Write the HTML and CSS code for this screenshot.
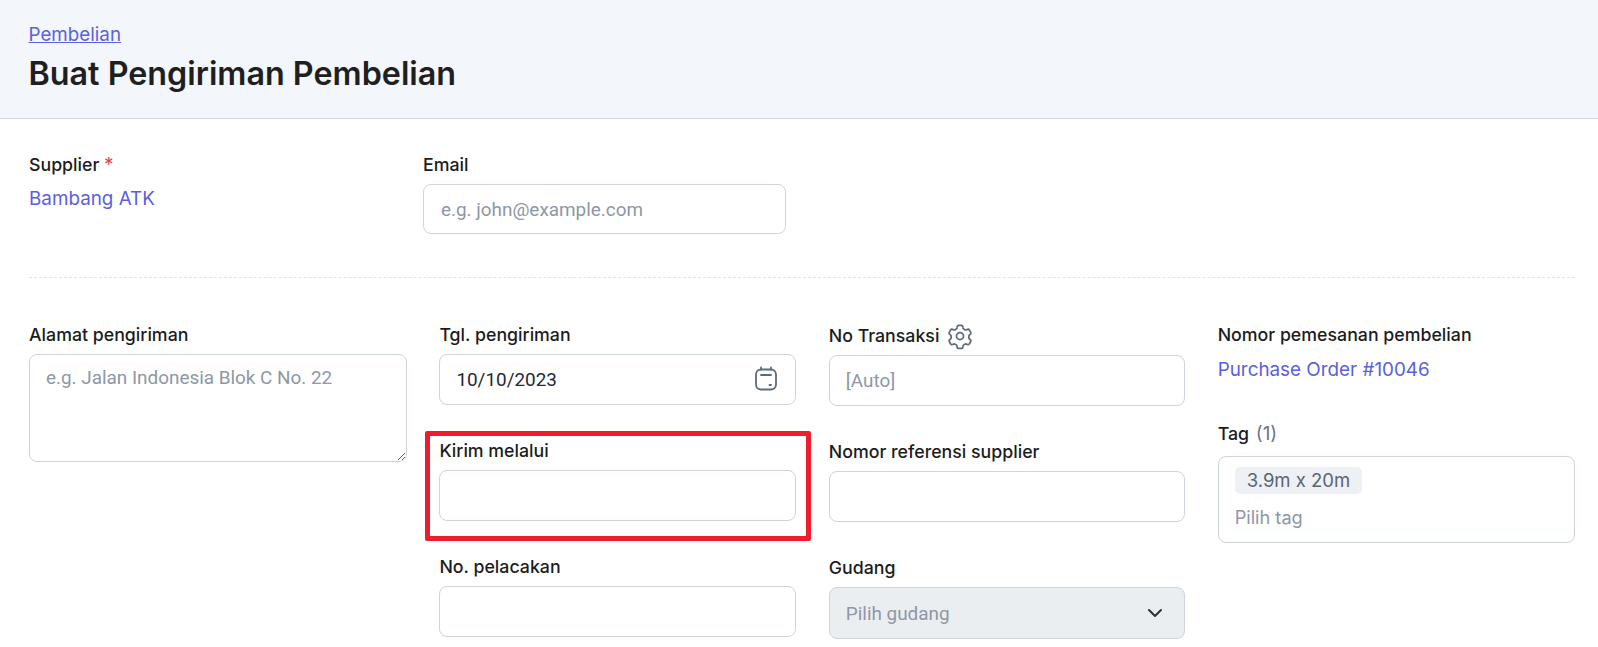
FILE: index.html
```html
<!DOCTYPE html>
<html lang="id">
<head>
<meta charset="utf-8">
<title>Buat Pengiriman Pembelian</title>
<link rel="stylesheet" href="styles.css">
</head>
<body>
<header class="page-header">
  <a class="crumb" href="#">Pembelian</a>
  <h1 class="title">Buat Pengiriman Pembelian</h1>
</header>
<main class="content">
  <section class="top-row">
    <div class="group">
      <div class="label">Supplier <span class="req">*</span></div>
      <a class="value" href="#">Bambang ATK</a>
    </div>
    <div class="group">
      <label class="label">Email</label>
      <input class="field" type="text" placeholder="e.g. john@example.com">
    </div>
  </section>
  <hr class="divider">
  <section class="form-grid">
    <div class="col">
      <label class="label">Alamat pengiriman</label>
      <textarea class="field area" placeholder="e.g. Jalan Indonesia Blok C No. 22"></textarea>
    </div>
    <div class="col">
      <div class="group spaced">
        <label class="label">Tgl. pengiriman</label>
        <div class="with-icon">
          <input class="field dark" type="text" value="10/10/2023">
          <svg class="cal" width="24" height="25" viewBox="0 0 24 25" fill="none" stroke="#5f6b7a" stroke-width="1.8" stroke-linecap="round"><rect x="2" y="3.5" width="20" height="20" rx="5"/><path d="M7 1.5v2M17 1.5v2M7 9h10M15.5 19h1.5"/></svg>
        </div>
      </div>
      <div class="group spaced highlighted">
        <span class="mark"></span>
        <label class="label">Kirim melalui</label>
        <input class="field" type="text">
      </div>
      <div class="group">
        <label class="label">No. pelacakan</label>
        <input class="field" type="text">
      </div>
    </div>
    <div class="col">
      <div class="group spaced">
        <div class="label icon-label">No Transaksi
          <svg width="28" height="28" viewBox="0 0 24 24" fill="none" stroke="#5f6b7a" stroke-width="1.5" stroke-linecap="round" stroke-linejoin="round"><path d="M9.6 3.9c.1-.6.6-1 1.2-1h2.4c.6 0 1.1.4 1.2 1l.2 1.2c.1.4.3.7.6.9l1 .6c.3.2.7.2 1.1.1l1.2-.4c.6-.2 1.2 0 1.5.5l1.2 2.1c.3.5.2 1.1-.3 1.5l-.9.8c-.3.3-.5.6-.4 1v1.2c0 .4.1.7.4 1l.9.8c.5.4.6 1 .3 1.5l-1.2 2.1c-.3.5-.9.7-1.5.5l-1.2-.4c-.4-.1-.8-.1-1.1.1l-1 .6c-.3.2-.5.5-.6.9l-.2 1.2c-.1.6-.6 1-1.2 1h-2.4c-.6 0-1.1-.4-1.2-1l-.2-1.2c-.1-.4-.3-.7-.6-.9l-1-.6c-.3-.2-.7-.2-1.1-.1l-1.2.4c-.6.2-1.2 0-1.5-.5l-1.2-2.1c-.3-.5-.2-1.1.3-1.5l.9-.8c.3-.3.5-.6.4-1v-1.2c0-.4-.1-.7-.4-1l-.9-.8c-.5-.4-.6-1-.3-1.5l1.2-2.1c.3-.5.9-.7 1.5-.5l1.2.4c.4.1.8.1 1.1-.1l1-.6c.3-.2.5-.5.6-.9z"/><circle cx="12" cy="12" r="3"/></svg>
        </div>
        <input class="field" type="text" placeholder="[Auto]">
      </div>
      <div class="group spaced">
        <label class="label">Nomor referensi supplier</label>
        <input class="field" type="text">
      </div>
      <div class="group">
        <label class="label">Gudang</label>
        <div class="select">
          <span>Pilih gudang</span>
          <svg width="20" height="20" viewBox="0 0 20 20" fill="none" stroke="#2b2f36" stroke-width="2" stroke-linecap="round" stroke-linejoin="round"><path d="M4 7l6 6 6-6"/></svg>
        </div>
      </div>
    </div>
    <div class="col">
      <div class="group order">
        <div class="label">Nomor pemesanan pembelian</div>
        <a class="value" href="#">Purchase Order #10046</a>
      </div>
      <div class="group">
        <div class="label tag-label">Tag <span class="count">(1)</span></div>
        <div class="tagbox">
          <span class="chip">3.9m x 20m</span>
          <span class="tag-ph">Pilih tag</span>
        </div>
      </div>
    </div>
  </section>
</main>
</body>
</html>
```

FILE: styles.css
```css
* { box-sizing: border-box; }
html, body { margin: 0; padding: 0; }
body {
  background: #fff;
  color: #1c1c1c;
  font-family: Inter, "Liberation Sans", sans-serif;
  font-size: 16px;
  overflow: hidden;
  height: 647px;
}
.page-header {
  height: 119px;
  padding: 23px 29px 0 28.5px;
  background: #f3f6fb;
  border-bottom: 1px solid #cfd6e0;
}
.crumb {
  display: block;
  width: max-content;
  font-size: 18.8px;
  line-height: 24px;
  color: #5a60e0;
  text-decoration: underline;
}
.title {
  margin: 8px 0 0;
  font-size: 32.3px;
  line-height: 38px;
  font-weight: 600;
  color: #1f1f1f;
}
.content { padding: 34px 23px 0 29px; }
.top-row {
  display: grid;
  grid-template-columns: 394px 363px;
}
.top-row .field { height: 50px; padding-left: 17px; }
.group { display: flex; flex-direction: column; position: relative; }
.spaced { margin-bottom: 34.5px; }
.label {
  font-size: 17.75px;
  line-height: 24px;
  font-weight: 500;
  margin-bottom: 7px;
  display: block;
}
.req { color: #e2434b; font-size: 19px; font-weight: 400; }
.value {
  font-size: 18.85px;
  line-height: 24px;
  color: #5a60e0;
  text-decoration: none;
  margin-top: 3px;
}
.field {
  display: block;
  width: 100%;
  height: 50.5px;
  padding: 0 16px;
  border: 1px solid #ced4dc;
  border-radius: 8px;
  background: #fff;
  font-family: Roboto, sans-serif;
  font-size: 18.9px;
  color: #1f2937;
  outline: none;
}
.field::placeholder { color: #8d97a6; opacity: 1; }
.area {
  height: 108px;
  padding: 11px 16px;
  resize: vertical;
  line-height: 24px;
}
.divider {
  margin: 43px 0 45px;
  border: 0;
  border-top: 1px dashed #e0e3e8;
}
.form-grid {
  display: grid;
  grid-template-columns: 378px 357px 356.5px 1fr;
  column-gap: 32.4px;
  align-items: start;
}
.with-icon { position: relative; }
.cal { position: absolute; right: 18px; top: 12px; }
.highlighted .mark {
  position: absolute;
  left: -14px;
  right: -15px;
  top: -8px;
  bottom: -20.5px;
  border: 5px solid #ee1c2c;
  border-radius: 2px;
  pointer-events: none;
}
.icon-label {
  display: flex;
  align-items: center;
  gap: 7px;
  height: 25px;
}
.select {
  display: flex;
  align-items: center;
  justify-content: space-between;
  height: 52px;
  padding: 0 19px 0 16px;
  border: 1px solid #ced4dc;
  border-radius: 8px;
  background: #ebeef1;
  font-family: Roboto, sans-serif;
  font-size: 18.9px;
  color: #8d97a6;
}
.order { margin-bottom: 40px; }
.order .value { margin-top: 4px; }
.tag-label { margin-bottom: 10px; }
.count { color: #6b7583; font-size: 18.8px; font-weight: 400; margin-left: 2px; }
.tagbox {
  height: 87px;
  padding: 10px 16px 0;
  border: 1px solid #ced4dc;
  border-radius: 8px;
  display: flex;
  flex-direction: column;
  align-items: flex-start;
}
.chip {
  height: 27px;
  padding: 0 12px;
  border-radius: 5px;
  background: #edf0f4;
  font-size: 18.5px;
  line-height: 27px;
  color: #5b6573;
}
.tag-ph {
  margin-top: 11px;
  font-size: 18.2px;
  line-height: 24px;
  color: #8d97a6;
}
```
